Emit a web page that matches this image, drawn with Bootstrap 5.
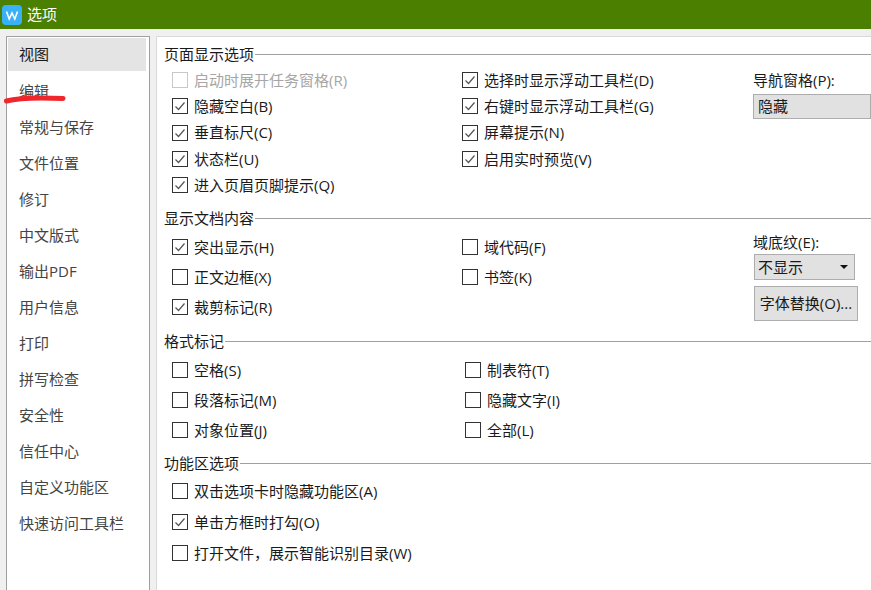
<!DOCTYPE html>
<html lang="zh-CN">
<head>
    <meta charset="UTF-8">
    <meta name="viewport" content="width=device-width, initial-scale=1.0">
    <title>选项</title>
    <link href="https://cdn.jsdelivr.net/npm/bootstrap@5.3.2/dist/css/bootstrap.min.css" rel="stylesheet">
    <style>
        body {
            background: #f0f0f0;
            color: #1a1a1a;
            font-family: "Open Sans", "Noto Sans CJK SC", sans-serif;
            font-size: 15px;
            height: 590px;
            overflow: hidden;
        }
        .title-strip {
            background: #4a7f00;
            color: #fff;
            height: 29px;
            padding-left: 2px;
            gap: 5px;
        }
        .main-area {
            height: 561px;
            padding: 7px 0 0 6px;
            gap: 6px;
        }
        .side-box {
            width: 144px;
            background: #fff;
            border: 1px solid #a0a0a0;
            border-bottom: 0;
            padding: 1px;
        }
        .side-item {
            height: 36px;
            padding-left: 11px;
            line-height: 36px;
            color: #444;
        }
        .side-item.is-active {
            height: 33px;
            line-height: 33px;
            margin-right: 2px;
            margin-bottom: 2px;
            background: #e4e4e4;
            color: #1a1a1a;
        }
        .opts-panel {
            background: #fff;
            border-top: 1px solid #d9d9d9;
            border-left: 1px solid #d9d9d9;
            padding: 7px 0 0 7px;
            min-width: 0;
        }
        .group-head {
            height: 20px;
            white-space: nowrap;
        }
        .group-head::after {
            content: "";
            flex: 1;
            border-top: 1px solid #a0a0a0;
            margin-left: 1px;
        }
        .group-body { margin-top: 4px; margin-bottom: 9px; }
        .group-body.tight-lines { margin-top: 3px; margin-bottom: 10px; }
        .group-body.wide-lines { margin-top: 2px; }
        .group-body.short-gap { margin-bottom: 8px; }
        .col-first { width: 298px; padding-left: 8px; }
        .col-second { width: 291px; }
        .col-second.shift-right { padding-left: 3px; }
        .opt-line {
            height: 30px;
            white-space: nowrap;
        }
        .tight-lines .opt-line { height: 26.25px; }
        .wide-lines .opt-line { height: 31px; }
        .opt-line .form-check-input {
            width: 16px;
            height: 16px;
            margin: 0 6px 0 0;
            border: 1px solid #333;
            border-radius: 0;
            box-shadow: none;
            flex: none;
        }
        .opt-line .form-check-input:checked {
            background-color: #fff;
            border-color: #333;
            background-size: 12px 12px;
            background-repeat: no-repeat;
            background-position: center;
            background-image: url("data:image/svg+xml,%3Csvg xmlns='http://www.w3.org/2000/svg' viewBox='0 0 12 12'%3E%3Cpath d='M1.5 6.5l3 3 6-7' fill='none' stroke='%23555' stroke-width='1.2'/%3E%3C/svg%3E");
        }
        .opt-line .form-check-input:disabled {
            opacity: 1;
            border-color: #c8c8c8;
            background-color: #fff;
        }
        .opt-line.is-off { color: #a6a6a6; }
        .col-extra { flex: 1; min-width: 0; }
        .fake-field {
            background: #e1e1e1;
            border: 1px solid #adadad;
            padding-left: 4px;
        }
        .nav-pane-field { height: 25px; line-height: 23px; margin-top: 1px; }
        .shade-label { padding-top: 1px; }
        .shade-field { width: 101px; height: 26px; margin-top: 2px; margin-left: 1px; padding-left: 3px; padding-right: 6px; }
        .shade-arrow {
            width: 0;
            height: 0;
            border-left: 4px solid transparent;
            border-right: 4px solid transparent;
            border-top: 4px solid #111;
        }
        .font-btn {
            width: 104px;
            height: 35px;
            margin-top: 6px;
            margin-left: 1px;
            padding: 0;
            background: #e1e1e1;
            border: 1px solid #adadad;
            border-radius: 0;
            color: #1a1a1a;
            font-size: 15px;
            white-space: nowrap;
        }
        .red-scribble {
            position: absolute;
            left: 3px;
            top: 94px;
        }
    </style>
</head>
<body>
    <div class="title-strip d-flex align-items-center">
        <svg width="20" height="20" viewBox="0 0 20 20">
            <rect width="20" height="20" rx="4" fill="#3ab0f7"/>
            <path d="M4.5 6.5l2.7 7.5 2.8-6 2.8 6 2.7-7.5" fill="none" stroke="#fff" stroke-width="1.6"/>
        </svg>
        <span>选项</span>
    </div>

    <div class="main-area d-flex">
        <div class="side-box flex-shrink-0">
            <div class="side-item is-active">视图</div>
            <div class="side-item">编辑</div>
            <div class="side-item">常规与保存</div>
            <div class="side-item">文件位置</div>
            <div class="side-item">修订</div>
            <div class="side-item">中文版式</div>
            <div class="side-item">输出PDF</div>
            <div class="side-item">用户信息</div>
            <div class="side-item">打印</div>
            <div class="side-item">拼写检查</div>
            <div class="side-item">安全性</div>
            <div class="side-item">信任中心</div>
            <div class="side-item">自定义功能区</div>
            <div class="side-item">快速访问工具栏</div>
        </div>

        <div class="opts-panel flex-grow-1">
            <div class="group-head d-flex align-items-center">页面显示选项</div>
            <div class="group-body d-flex tight-lines">
                <div class="col-first">
                    <label class="opt-line is-off d-flex align-items-center"><input class="form-check-input" type="checkbox" disabled>启动时展开任务窗格(R)</label>
                    <label class="opt-line d-flex align-items-center"><input class="form-check-input" type="checkbox" checked>隐藏空白(B)</label>
                    <label class="opt-line d-flex align-items-center"><input class="form-check-input" type="checkbox" checked>垂直标尺(C)</label>
                    <label class="opt-line d-flex align-items-center"><input class="form-check-input" type="checkbox" checked>状态栏(U)</label>
                    <label class="opt-line d-flex align-items-center"><input class="form-check-input" type="checkbox" checked>进入页眉页脚提示(Q)</label>
                </div>
                <div class="col-second">
                    <label class="opt-line d-flex align-items-center"><input class="form-check-input" type="checkbox" checked>选择时显示浮动工具栏(D)</label>
                    <label class="opt-line d-flex align-items-center"><input class="form-check-input" type="checkbox" checked>右键时显示浮动工具栏(G)</label>
                    <label class="opt-line d-flex align-items-center"><input class="form-check-input" type="checkbox" checked>屏幕提示(N)</label>
                    <label class="opt-line d-flex align-items-center"><input class="form-check-input" type="checkbox" checked>启用实时预览(V)</label>
                </div>
                <div class="col-extra">
                    <div class="opt-line d-flex align-items-center">导航窗格(P):</div>
                    <div class="fake-field nav-pane-field">隐藏</div>
                </div>
            </div>

            <div class="group-head d-flex align-items-center">显示文档内容</div>
            <div class="group-body d-flex">
                <div class="col-first">
                    <label class="opt-line d-flex align-items-center"><input class="form-check-input" type="checkbox" checked>突出显示(H)</label>
                    <label class="opt-line d-flex align-items-center"><input class="form-check-input" type="checkbox">正文边框(X)</label>
                    <label class="opt-line d-flex align-items-center"><input class="form-check-input" type="checkbox" checked>裁剪标记(R)</label>
                </div>
                <div class="col-second">
                    <label class="opt-line d-flex align-items-center"><input class="form-check-input" type="checkbox">域代码(F)</label>
                    <label class="opt-line d-flex align-items-center"><input class="form-check-input" type="checkbox">书签(K)</label>
                </div>
                <div class="col-extra">
                    <div class="shade-label lh-sm">域底纹(E):</div>
                    <div class="fake-field shade-field d-flex align-items-center justify-content-between"><span>不显示</span><span class="shade-arrow"></span></div>
                    <button type="button" class="btn font-btn">字体替换(O)...</button>
                </div>
            </div>

            <div class="group-head d-flex align-items-center">格式标记</div>
            <div class="group-body short-gap d-flex">
                <div class="col-first">
                    <label class="opt-line d-flex align-items-center"><input class="form-check-input" type="checkbox">空格(S)</label>
                    <label class="opt-line d-flex align-items-center"><input class="form-check-input" type="checkbox">段落标记(M)</label>
                    <label class="opt-line d-flex align-items-center"><input class="form-check-input" type="checkbox">对象位置(J)</label>
                </div>
                <div class="col-second shift-right">
                    <label class="opt-line d-flex align-items-center"><input class="form-check-input" type="checkbox">制表符(T)</label>
                    <label class="opt-line d-flex align-items-center"><input class="form-check-input" type="checkbox">隐藏文字(I)</label>
                    <label class="opt-line d-flex align-items-center"><input class="form-check-input" type="checkbox">全部(L)</label>
                </div>
            </div>

            <div class="group-head d-flex align-items-center">功能区选项</div>
            <div class="group-body wide-lines">
                <div class="col-first">
                    <label class="opt-line d-flex align-items-center"><input class="form-check-input" type="checkbox">双击选项卡时隐藏功能区(A)</label>
                    <label class="opt-line d-flex align-items-center"><input class="form-check-input" type="checkbox" checked>单击方框时打勾(O)</label>
                    <label class="opt-line d-flex align-items-center"><input class="form-check-input" type="checkbox">打开文件，展示智能识别目录(W)</label>
                </div>
            </div>
        </div>
    </div>

    <svg class="red-scribble" width="66" height="12" viewBox="0 0 66 12">
        <path d="M3.5 7C17 3.5 38 3.5 60 4.5" fill="none" stroke="#f0262c" stroke-width="5" stroke-linecap="round"/>
    </svg>

    <script src="https://cdn.jsdelivr.net/npm/bootstrap@5.3.2/dist/js/bootstrap.bundle.min.js"></script>
</body>
</html>
